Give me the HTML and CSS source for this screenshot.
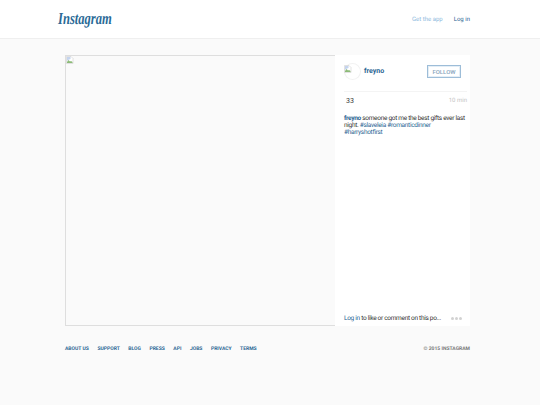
FILE: index.html
```html
<!DOCTYPE html>
<html lang="en">
<head>
    <meta charset="UTF-8">
    <title>Instagram</title>
    <link rel="stylesheet" href="styles.css">
</head>
<body>
    <header class="top">
        <div class="top-inner">
            <a class="logo">Instagram</a>
            <nav class="top-links">
                <a class="get-app">Get the app</a>
                <a class="login">Log in</a>
            </nav>
        </div>
    </header>

    <main class="post">
        <div class="photo">
            <svg class="broken" width="8" height="8" viewBox="0 0 16 16">
                <path d="M1 1h9l4 4v10H1z" fill="#fff" stroke="#c4c4c4"/>
                <path d="M2 12l3-4 3 3 2-1 3 2v2H2z" fill="#8dbb78"/>
                <path d="M2 2h7v4l-5 2-2 2z" fill="#c4d4ee"/>
            </svg>
        </div>
        <aside class="side">
            <div class="owner">
                <div class="avatar">
                    <svg class="broken" width="8" height="8" viewBox="0 0 16 16">
                        <path d="M1 1h9l4 4v10H1z" fill="#fff" stroke="#c4c4c4"/>
                        <path d="M2 12l3-4 3 3 2-1 3 2v2H2z" fill="#8dbb78"/>
                        <path d="M2 2h7v4l-5 2-2 2z" fill="#c4d4ee"/>
                    </svg>
                </div>
                <a class="owner-name">freyno</a>
                <button class="follow">FOLLOW</button>
            </div>
            <div class="stats">
                <span class="likes">33</span>
                <span class="age">10 min</span>
            </div>
            <p class="caption"><a class="user">freyno</a> someone got me the best gifts ever last night. <a>#slaveleia</a> <a>#romanticdinner</a> <a>#harryshotfirst</a></p>
            <div class="comment-bar">
                <p class="comment-text"><a>Log in</a> to like or comment on this po...</p>
                <div class="dots"><i></i><i></i><i></i></div>
            </div>
        </aside>
    </main>

    <footer class="foot">
        <nav class="foot-links">
            <a>ABOUT US</a>
            <a>SUPPORT</a>
            <a>BLOG</a>
            <a>PRESS</a>
            <a>API</a>
            <a>JOBS</a>
            <a>PRIVACY</a>
            <a>TERMS</a>
        </nav>
        <span class="copy">© 2015 INSTAGRAM</span>
    </footer>
</body>
</html>
```
FILE: styles.css
```css
body {
    margin: 0;
    background-color: #fafafa;
    font-family: Roboto, "Liberation Sans", sans-serif;
    text-rendering: geometricPrecision;
    color: #333;
    height: 405px;
    overflow: hidden;
}
a {
    color: #2a6593;
}
.top {
    height: 38px;
    background-color: #fff;
    border-bottom: 1px solid #efefef;
}
.top-inner {
    display: flex;
    justify-content: space-between;
    align-items: center;
    height: 38px;
    padding: 0 70px 0 58px;
}
.logo {
    display: inline-block;
    font-family: "Liberation Serif", serif;
    font-style: italic;
    font-weight: bold;
    font-size: 17px;
    transform: scaleX(0.74);
    transform-origin: left center;
    margin-right: -19px;
    color: #2a6a96;
}
.top-links {
    display: flex;
    gap: 11px;
    font-size: 6px;
}
.get-app {
    color: #8dbade;
}
.post {
    display: flex;
    width: 405px;
    height: 271px;
    margin: 16px 0 0 65px;
}
.photo {
    width: 269px;
    height: 269px;
    background-color: #fafafa;
    border: 1px solid #dedede;
}
.broken {
    display: block;
}
.side {
    display: flex;
    flex-direction: column;
    width: 135px;
    padding: 0 3px 0 9px;
    box-sizing: border-box;
    background-color: #fff;
    margin-left: -1px;
}
.owner {
    display: flex;
    align-items: center;
    height: 32px;
    padding-bottom: 4px;
    border-bottom: 1px solid #f4f4f4;
    flex-shrink: 0;
}
.avatar {
    width: 17px;
    height: 17px;
    margin-right: 3px;
    padding: 2px 0 0 0;
    box-sizing: border-box;
    border-radius: 50%;
    box-shadow: inset 0 0 0 1px #f2f2f2;
}
.owner-name {
    font-size: 7px;
    font-weight: 700;
}
.follow {
    margin-left: auto;
    margin-right: 6px;
    width: 34px;
    height: 13px;
    padding: 0;
    background-color: #fff;
    border: 1px solid #9dbdd8;
    box-shadow: 0 0 0 1px #e4eef6 inset;
    color: #8aa6bd;
    font-family: inherit;
    font-size: 6px;
    font-weight: 500;
}
.stats {
    display: flex;
    justify-content: space-between;
    align-items: center;
    height: 17px;
    font-size: 7px;
    padding-left: 2px;
}
.age {
    font-size: 6px;
    color: #c4c4c4;
}
.caption {
    margin: 6px 0 0;
    font-size: 6.5px;
    letter-spacing: -0.3px;
    line-height: 7px;
}
.user {
    font-weight: 700;
}
.comment-bar {
    display: flex;
    align-items: center;
    justify-content: space-between;
    margin-top: auto;
    height: 16px;
    font-size: 6.5px;
    letter-spacing: -0.3px;
    padding-right: 5px;
}
.comment-text {
    margin: 0;
    white-space: nowrap;
}
.dots {
    display: flex;
    gap: 1px;
}
.dots i {
    width: 3px;
    height: 3px;
    border-radius: 50%;
    background-color: #d2d2d2;
}
.foot {
    display: flex;
    justify-content: space-between;
    align-items: center;
    width: 405px;
    margin: 20px 0 0 65px;
    font-size: 5px;
    font-weight: 700;
}
.foot-links {
    display: flex;
    gap: 8.5px;
}
.copy {
    color: #777;
}
```
